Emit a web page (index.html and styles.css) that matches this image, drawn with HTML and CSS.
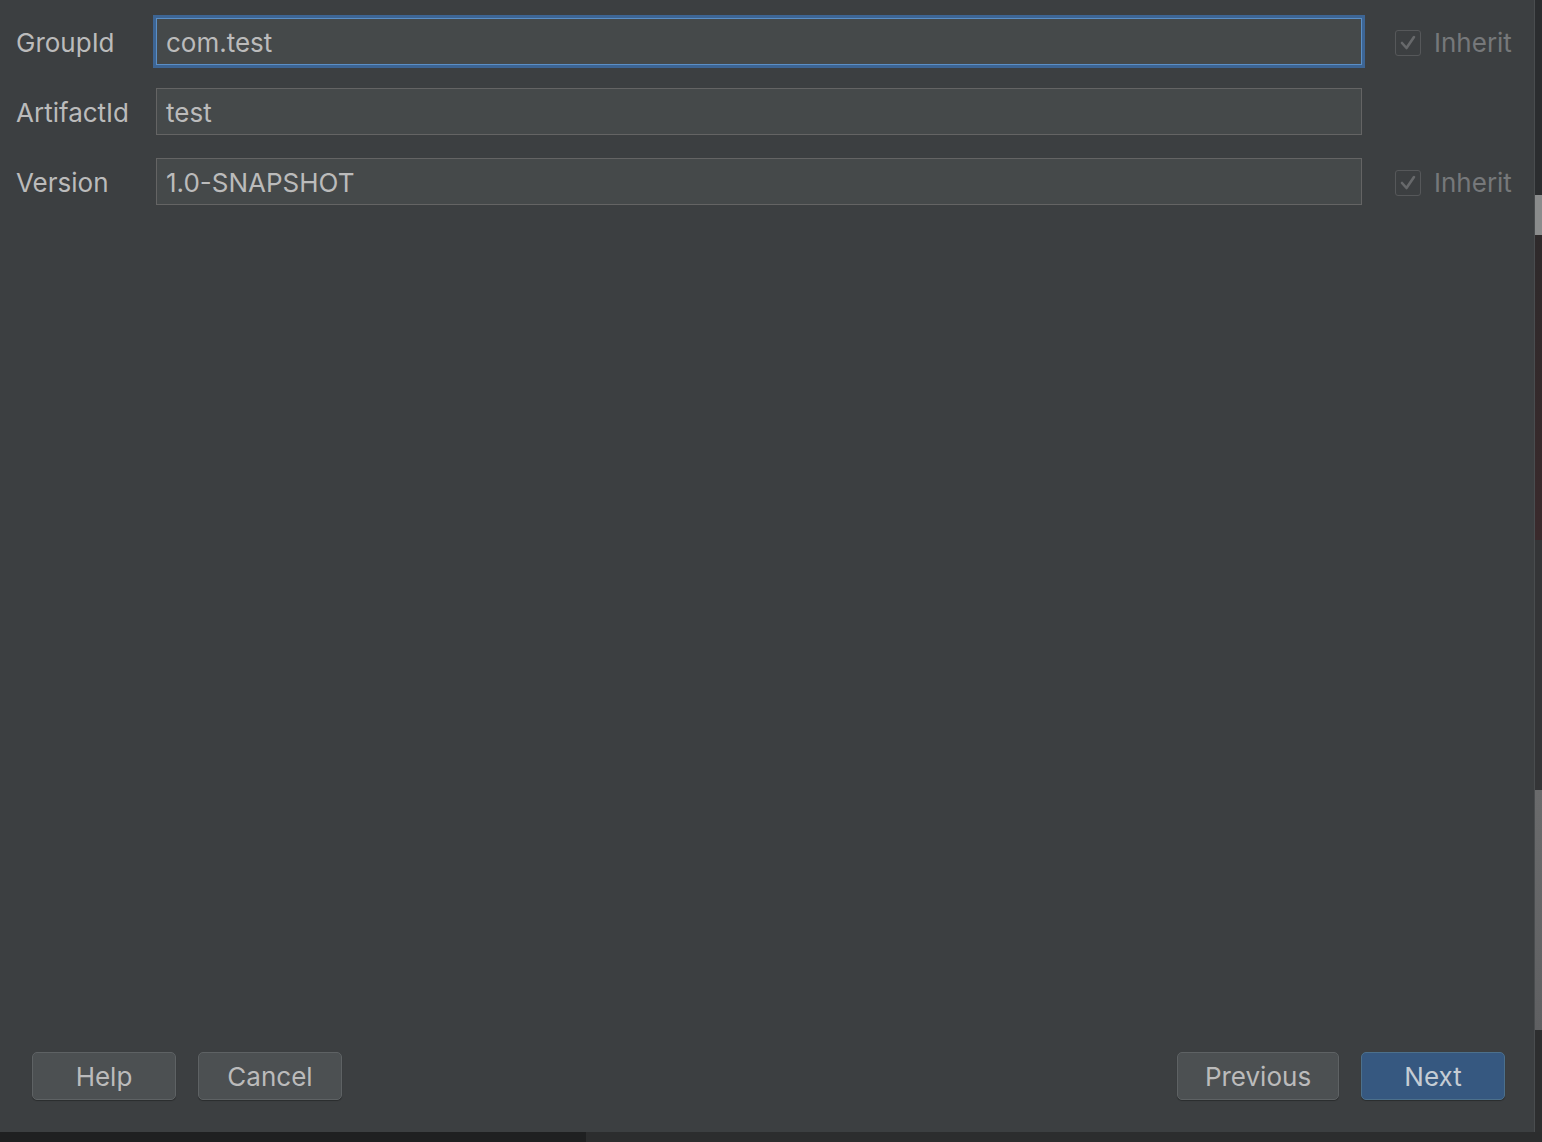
FILE: index.html
```html
<!DOCTYPE html>
<html lang="en">
<head>
    <meta charset="UTF-8">
    <title>New Project</title>
    <link rel="stylesheet" href="styles.css">
</head>
<body>
    <div class="screen">
        <div class="dialog">
            <div class="form">
                <div class="form__row">
                    <label class="form__label">GroupId</label>
                    <div class="field field--focused">com.test</div>
                    <div class="inherit">
                        <span class="checkbox">
                            <svg class="checkbox__mark" viewBox="0 0 20 20"><path d="M4 10 L8.5 15 L16 4" fill="none" stroke="#67696b" stroke-width="2.6" stroke-linecap="round" stroke-linejoin="round"/></svg>
                        </span>
                        <span class="inherit__text">Inherit</span>
                    </div>
                </div>
                <div class="form__row">
                    <label class="form__label">ArtifactId</label>
                    <div class="field">test</div>
                    <div class="inherit"></div>
                </div>
                <div class="form__row">
                    <label class="form__label">Version</label>
                    <div class="field">1.0-SNAPSHOT</div>
                    <div class="inherit">
                        <span class="checkbox">
                            <svg class="checkbox__mark" viewBox="0 0 20 20"><path d="M4 10 L8.5 15 L16 4" fill="none" stroke="#67696b" stroke-width="2.6" stroke-linecap="round" stroke-linejoin="round"/></svg>
                        </span>
                        <span class="inherit__text">Inherit</span>
                    </div>
                </div>
            </div>

            <div class="buttons">
                <div class="buttons__group">
                    <button class="btn">Help</button>
                    <button class="btn">Cancel</button>
                </div>
                <div class="buttons__group">
                    <button class="btn btn--wide">Previous</button>
                    <button class="btn btn--default">Next</button>
                </div>
            </div>
        </div>
        <div class="side"></div>
    </div>
    <div class="bottom"></div>
</body>
</html>
```

FILE: styles.css
```css
html, body {
    margin: 0;
    padding: 0;
    background-color: #232425;
    font-family: "Inter", "Open Sans", sans-serif;
    color: #bbbbbb;
}

.screen {
    display: flex;
    height: 1132px;
}

.dialog {
    width: 1535px;
    background-color: #3c3f41;
    display: flex;
    flex-direction: column;
    justify-content: space-between;
    box-sizing: border-box;
    padding: 18px 29px 32px 0;
    border-right: 1px solid #4a4d4f;
}

.form {
    display: flex;
    flex-direction: column;
    gap: 23px;
}

.form__row {
    display: grid;
    grid-template-columns: 156px 1206px 1fr;
    align-items: center;
    height: 47px;
}

.form__label {
    padding-left: 16px;
    padding-top: 2px;
    font-size: 26px;
    color: #bbbbbb;
}

.field {
    height: 47px;
    box-sizing: border-box;
    border: 1px solid #646464;
    background-color: #45494a;
    padding: 2px 9px 0;
    font-size: 26px;
    line-height: 43px;
    color: #bbbbbb;
}

.field--focused {
    border: 1px solid #5b8fc6;
    box-shadow: 0 0 0 3px #3d6594;
}

.inherit {
    display: flex;
    align-items: center;
    gap: 13px;
    padding-left: 33px;
    padding-top: 2px;
}

.checkbox {
    width: 26px;
    height: 26px;
    box-sizing: border-box;
    border: 1px solid #56585a;
    border-radius: 3px;
    display: flex;
    align-items: center;
    justify-content: center;
}

.checkbox__mark {
    width: 20px;
    height: 20px;
}

.inherit__text {
    font-size: 26px;
    color: #76787a;
}

.buttons {
    display: flex;
    justify-content: space-between;
    padding-left: 32px;
}

.buttons__group {
    display: flex;
    gap: 22px;
}

.btn {
    width: 144px;
    height: 48px;
    padding-top: 2px;
    font-family: inherit;
    font-size: 26px;
    color: #bbbbbb;
    background-color: #4c5052;
    border: 1px solid #5e6264;
    border-radius: 5px;
    box-shadow: 0 1px 1px rgba(0, 0, 0, 0.3);
}

.btn--wide {
    width: 162px;
}

.btn--default {
    background-color: #365880;
    border-color: #4c708c;
    color: #c5ccd4;
}

.side {
    flex: 1;
    background: linear-gradient(#2b2d2f 0, #2b2d2f 195px, #8a8c8c 195px, #8a8c8c 235px, #2e2a2b 235px, #3a2a2c 540px, #343537 540px, #343537 790px, #6a6b6c 790px, #5f6062 1030px, #2d2e2f 1030px);
}

.bottom {
    height: 10px;
    background: linear-gradient(90deg, #1f2021 0, #1f2021 586px, #2c2d2e 586px);
}
```
